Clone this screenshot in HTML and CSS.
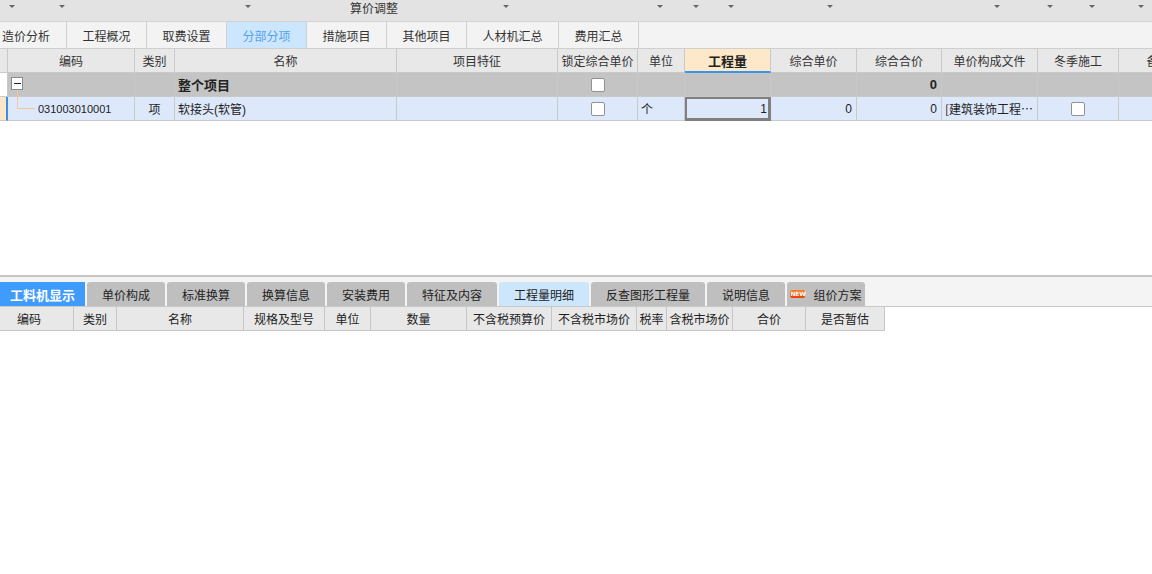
FILE: index.html
```html
<!DOCTYPE html>
<html lang="zh-CN">
<head>
<meta charset="utf-8">
<title>分部分项</title>
<link rel="stylesheet" href="styles.css">
</head>
<body>
<div class="app">
  <div class="topbar">
    <div class="seg"><i class="arrow"></i></div>
    <div class="seg"><i class="arrow"></i></div>
    <div class="seg"><i class="arrow"></i></div>
    <div class="seg seg-title"><span class="title">算价调整</span><i class="arrow"></i></div>
    <div class="seg"><i class="arrow"></i></div>
    <div class="seg"><i class="arrow"></i></div>
    <div class="seg"><i class="arrow"></i></div>
    <div class="seg"><i class="arrow"></i></div>
    <div class="seg"><i class="arrow"></i></div>
    <div class="seg"><i class="arrow"></i></div>
    <div class="seg"><i class="arrow"></i></div>
    <div class="seg"><i class="arrow"></i></div>
  </div>

  <div class="tabs">
    <div class="tab tab-first">造价分析</div>
    <div class="tab">工程概况</div>
    <div class="tab">取费设置</div>
    <div class="tab active">分部分项</div>
    <div class="tab">措施项目</div>
    <div class="tab">其他项目</div>
    <div class="tab tab-wide">人材机汇总</div>
    <div class="tab">费用汇总</div>
  </div>

  <div class="main">
    <div class="grid head">
      <div class="c ind"></div>
      <div class="c ctr">编码</div>
      <div class="c ctr">类别</div>
      <div class="c ctr">名称</div>
      <div class="c ctr">项目特征</div>
      <div class="c ctr">锁定综合单价</div>
      <div class="c ctr">单位</div>
      <div class="c ctr hl">工程量</div>
      <div class="c ctr">综合单价</div>
      <div class="c ctr">综合合价</div>
      <div class="c ctr">单价构成文件</div>
      <div class="c ctr">冬季施工</div>
      <div class="c ctr">备注</div>
    </div>
    <div class="grid row r-group">
      <div class="c ind ind-white"></div>
      <div class="c code-g"><span class="exp"><i class="minus"></i></span></div>
      <div class="c"></div>
      <div class="c bold">整个项目</div>
      <div class="c"></div>
      <div class="c ctr"><span class="cb"></span></div>
      <div class="c"></div>
      <div class="c"></div>
      <div class="c"></div>
      <div class="c num bold">0</div>
      <div class="c"></div>
      <div class="c"></div>
      <div class="c"></div>
    </div>
    <div class="grid row r-item">
      <div class="c ind ind-cur"></div>
      <div class="c code-i">031003010001</div>
      <div class="c ctr">项</div>
      <div class="c">软接头(软管)</div>
      <div class="c"></div>
      <div class="c ctr"><span class="cb"></span></div>
      <div class="c">个</div>
      <div class="c num qty">1</div>
      <div class="c num">0</div>
      <div class="c num">0</div>
      <div class="c ell">[建筑装饰工程…</div>
      <div class="c ctr"><span class="cb"></span></div>
      <div class="c"></div>
    </div>
  </div>

  <div class="bottom">
    <div class="btabs">
      <div class="btab b-active">工料机显示</div>
      <div class="btab">单价构成</div>
      <div class="btab">标准换算</div>
      <div class="btab">换算信息</div>
      <div class="btab">安装费用</div>
      <div class="btab w90">特征及内容</div>
      <div class="btab w90 b-light">工程量明细</div>
      <div class="btab w114">反查图形工程量</div>
      <div class="btab">说明信息</div>
      <div class="btab"><span class="new">NEW</span><span>组价方案</span></div>
    </div>
    <div class="bgrid">
      <div class="bc bc-first">编码</div>
      <div class="bc">类别</div>
      <div class="bc">名称</div>
      <div class="bc">规格及型号</div>
      <div class="bc">单位</div>
      <div class="bc">数量</div>
      <div class="bc">不含税预算价</div>
      <div class="bc">不含税市场价</div>
      <div class="bc">税率</div>
      <div class="bc">含税市场价</div>
      <div class="bc">合价</div>
      <div class="bc">是否暂估</div>
    </div>
  </div>
</div>
</body>
</html>
```

FILE: styles.css
```css
* { box-sizing: border-box; margin: 0; padding: 0; }

html, body {
  width: 1152px;
  height: 574px;
  overflow: hidden;
  background: #ffffff;
}

body {
  font-family: "Liberation Sans", "Noto Sans CJK SC", sans-serif;
  font-size: 12px;
  color: #222222;
}

.app {
  width: 1152px;
  height: 574px;
  display: flex;
  flex-direction: column;
}

/* top bar */
.topbar {
  height: 22px;
  background: #e3e3e3;
  border-bottom: 1px solid #d3d3d3;
  display: grid;
  grid-template-columns: 18px 50px 186px 258px 154px 36px 35px 99px 167px 53px 42px 49px;
}

.seg {
  display: flex;
  justify-content: flex-end;
  align-items: flex-start;
  padding-right: 3px;
}

.seg-title { justify-content: flex-start; }

.title {
  margin-left: 96px;
  margin-right: auto;
  line-height: 16px;
  font-family: "Noto Sans CJK SC", sans-serif;
  font-size: 12px;
  color: #333333;
}

.arrow {
  display: block;
  width: 0;
  height: 0;
  margin-top: 5px;
  border-left: 3px solid transparent;
  border-right: 3px solid transparent;
  border-top: 3px solid #666666;
}

/* module tabs */
.tabs {
  height: 27px;
  background: #f3f3f3;
  border-bottom: 1px solid #cfcfcf;
  display: flex;
}

.tab {
  width: 80px;
  height: 26px;
  border-right: 1px solid #d0d0d0;
  display: flex;
  align-items: center;
  justify-content: center;
  font-family: "Noto Sans CJK SC", sans-serif;
  font-size: 12px;
  color: #333333;
  padding-top: 1px;
}

.tab-first {
  width: 67px;
  justify-content: flex-start;
  padding-left: 2px;
}

.tab-wide { width: 92px; }

.tab.active {
  background: #cce6fd;
  color: #55a2ea;
}

/* main grid */
.main {
  height: 226px;
  overflow: hidden;
}

.grid {
  display: grid;
  grid-template-columns: 8px 127px 40px 222px 161px 80px 47px 86px 86px 85px 96px 81px 80px;
  height: 24px;
}

.c {
  border-right: 1px solid #c9c9c9;
  border-bottom: 1px solid #c9c9c9;
  display: flex;
  align-items: center;
  padding: 0 3px;
  white-space: nowrap;
  overflow: hidden;
}

.ctr { justify-content: center; }

.num {
  justify-content: flex-end;
  padding-right: 4px;
}

.head .c {
  background: #e8e8e8;
  color: #333333;
  font-family: "Noto Sans CJK SC", sans-serif;
  padding: 0;
}

.head .hl {
  background: #fde8ca;
  border-bottom: 2px solid #3b93ea;
  font-weight: bold;
  font-size: 13px;
  color: #222222;
  padding-top: 1px;
}

.ind { padding: 0; }

.r-group .c {
  background: #c4c4c4;
}

.r-group .ind-white { background: #ffffff; }

.bold {
  font-weight: bold;
  font-size: 13px;
  color: #222222;
}

.r-item .c {
  background: #dde9fb;
}

.r-item .ind-cur {
  background: #fde6c6;
  border-right: 2px solid #3a8ee8;
}

.code-g { padding-left: 3px; }

.exp {
  width: 12px;
  height: 13px;
  border: 1px solid #8a8a8a;
  background: #ffffff;
  display: flex;
  align-items: center;
  justify-content: center;
  margin-top: -2px;
}

.minus {
  display: block;
  width: 7px;
  height: 1px;
  background: #222222;
}

.r-item .code-i {
  position: relative;
  overflow: visible;
  padding-left: 30px;
  font-size: 11px;
}

.code-i::before {
  content: "";
  position: absolute;
  left: 9px;
  top: -7px;
  width: 17px;
  height: 18px;
  border-left: 1px solid #f5c697;
  border-bottom: 1px solid #f5c697;
}

.r-item .qty {
  box-shadow: inset 0 0 0 2px #7f7f7f;
  border-right-color: #7f7f7f;
  border-bottom-color: #7f7f7f;
  padding-right: 3px;
}

.ell {
  font-family: "Noto Sans CJK SC", sans-serif;
}

.cb {
  display: block;
  width: 14px;
  height: 14px;
  border: 1px solid #929292;
  border-radius: 2px;
  background: #ffffff;
}

/* bottom panel */
.bottom {
  border-top: 2px solid #c5c5c5;
  flex: 1;
  display: flex;
  flex-direction: column;
}

.btabs {
  height: 30px;
  padding-top: 5px;
  background: #f4f4f4;
  border-bottom: 1px solid #c8c8c8;
  display: flex;
  gap: 2px;
}

.btab {
  width: 78px;
  height: 24px;
  background: #bfbfbf;
  border-radius: 3px 3px 0 0;
  display: flex;
  align-items: center;
  justify-content: center;
  gap: 8px;
  font-family: "Noto Sans CJK SC", sans-serif;
  font-size: 12px;
  color: #222222;
}

.btab.b-active {
  width: 85px;
  border-radius: 0;
  background: #3f9cfc;
  color: #ffffff;
  font-weight: bold;
  font-size: 13px;
}

.btab.b-light { background: #cce6fc; }

.w90 { width: 90px; }
.w114 { width: 114px; }

.new {
  display: flex;
  align-items: center;
  justify-content: center;
  width: 15px;
  height: 8px;
  border-radius: 2px;
  background: linear-gradient(#ff7a1a, #e8400a);
  color: #ffffff;
  font-family: "DejaVu Sans", sans-serif;
  font-size: 6px;
  font-weight: bold;
  line-height: 8px;
  letter-spacing: -0.2px;
}

.bgrid {
  display: grid;
  grid-template-columns: 74px 43px 127px 81px 46px 96px 85px 85px 30px 66px 73px 79px;
  width: 885px;
  height: 24px;
}

.bc {
  background: #e8e8e8;
  border-right: 1px solid #c6c6c6;
  border-bottom: 1px solid #c6c6c6;
  display: flex;
  align-items: center;
  justify-content: center;
  font-family: "Noto Sans CJK SC", sans-serif;
  font-size: 12px;
  color: #222222;
  white-space: nowrap;
  overflow: hidden;
}

.bc-first { padding-right: 15px; }
```
